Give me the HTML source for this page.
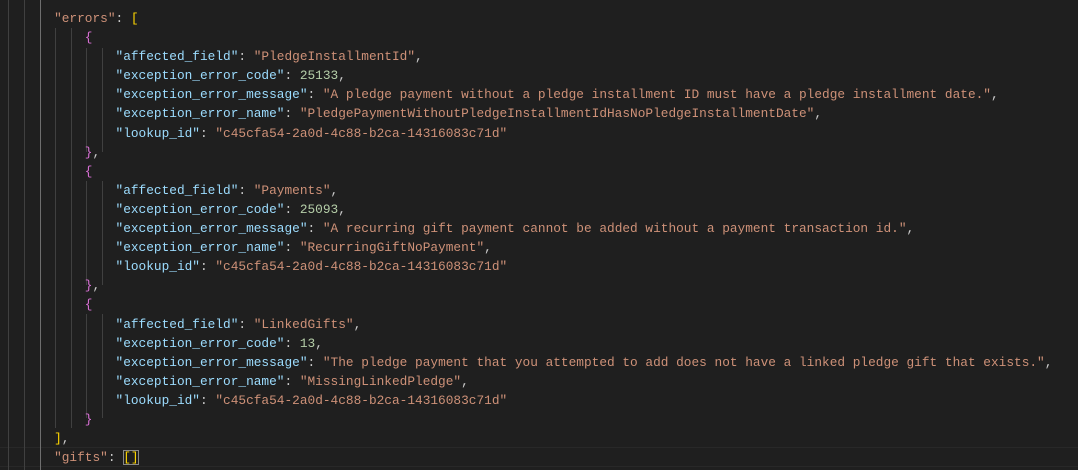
<!DOCTYPE html>
<html><head><meta charset="utf-8"><style>
html,body{margin:0;padding:0;background:#1f1f1f;width:1078px;height:470px;overflow:hidden}
#ed{position:absolute;left:8px;top:9px;font-family:"Liberation Mono",monospace;font-size:12.8px;line-height:19.1px;color:#cccccc}
.l{height:19.1px;position:relative;white-space:pre}
.k{color:#9cdcfe}.s{color:#ce9178}.n{color:#b5cea8}.y{color:#ffd700}.p{color:#da70d6}.w{color:#cccccc}
.g{position:absolute;top:0;bottom:0;width:1px;background:#404040}
#cur{position:absolute;left:0;top:447px;width:1078px;height:18px;border-top:1px solid #282828;border-bottom:1px solid #282828}
.box{outline:1px solid #888;outline-offset:-1px}
</style></head><body>
<div id="cur"></div>
<div class="g" style="left:8px;top:0;height:470px"></div>
<div class="g" style="left:24px;top:0;height:470px"></div>
<div class="g" style="left:40px;top:0;height:470px;background:#6e6e6e"></div>
<div class="g" style="left:55px;top:28px;height:400px"></div>
<div class="g" style="left:71px;top:28px;height:400px"></div>
<div class="g" style="left:86px;top:48px;height:104px"></div>
<div class="g" style="left:86px;top:181px;height:104px"></div>
<div class="g" style="left:86px;top:314px;height:104px"></div>
<div class="g" style="left:102px;top:48px;height:104px"></div>
<div class="g" style="left:102px;top:181px;height:104px"></div>
<div class="g" style="left:102px;top:314px;height:104px"></div>
<div id="ed"><div class="l">      <span class="s">"errors"</span>: <span class="y">[</span></div><div class="l">          <span class="p">{</span></div><div class="l">              <span class="k">"affected_field"</span>: <span class="s">"PledgeInstallmentId"</span>,</div><div class="l">              <span class="k">"exception_error_code"</span>: <span class="n">25133</span>,</div><div class="l">              <span class="k">"exception_error_message"</span>: <span class="s">"A pledge payment without a pledge installment ID must have a pledge installment date."</span>,</div><div class="l">              <span class="k">"exception_error_name"</span>: <span class="s">"PledgePaymentWithoutPledgeInstallmentIdHasNoPledgeInstallmentDate"</span>,</div><div class="l">              <span class="k">"lookup_id"</span>: <span class="s">"c45cfa54-2a0d-4c88-b2ca-14316083c71d"</span></div><div class="l">          <span class="p">}</span>,</div><div class="l">          <span class="p">{</span></div><div class="l">              <span class="k">"affected_field"</span>: <span class="s">"Payments"</span>,</div><div class="l">              <span class="k">"exception_error_code"</span>: <span class="n">25093</span>,</div><div class="l">              <span class="k">"exception_error_message"</span>: <span class="s">"A recurring gift payment cannot be added without a payment transaction id."</span>,</div><div class="l">              <span class="k">"exception_error_name"</span>: <span class="s">"RecurringGiftNoPayment"</span>,</div><div class="l">              <span class="k">"lookup_id"</span>: <span class="s">"c45cfa54-2a0d-4c88-b2ca-14316083c71d"</span></div><div class="l">          <span class="p">}</span>,</div><div class="l">          <span class="p">{</span></div><div class="l">              <span class="k">"affected_field"</span>: <span class="s">"LinkedGifts"</span>,</div><div class="l">              <span class="k">"exception_error_code"</span>: <span class="n">13</span>,</div><div class="l">              <span class="k">"exception_error_message"</span>: <span class="s">"The pledge payment that you attempted to add does not have a linked pledge gift that exists."</span>,</div><div class="l">              <span class="k">"exception_error_name"</span>: <span class="s">"MissingLinkedPledge"</span>,</div><div class="l">              <span class="k">"lookup_id"</span>: <span class="s">"c45cfa54-2a0d-4c88-b2ca-14316083c71d"</span></div><div class="l">          <span class="p">}</span></div><div class="l">      <span class="y">]</span>,</div><div class="l">      <span class="s">"gifts"</span>: <span class="y box">[]</span></div></div>
</body></html>
